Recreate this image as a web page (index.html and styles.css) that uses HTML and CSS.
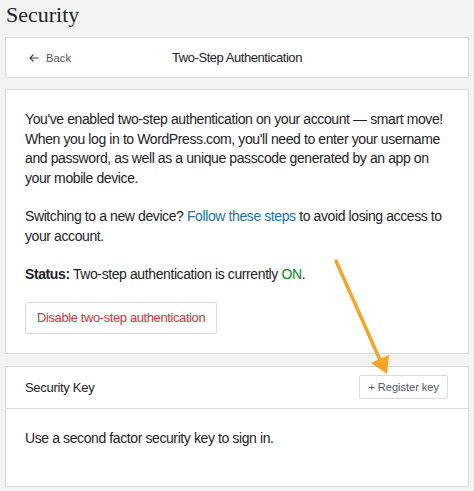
FILE: index.html
```html
<!DOCTYPE html>
<html>
<head>
<meta charset="utf-8">
<link rel="stylesheet" href="styles.css">
</head>
<body>
<div class="page">
  <h1 class="title">Security</h1>
  <div class="card header-card">
    <a class="back"><svg class="back-icon" viewBox="0 0 24 24" width="12" height="12"><path d="M21 12H4M11 5l-7 7 7 7" fill="none" stroke="#3c434a" stroke-width="2.2"/></svg>Back</a>
    <div class="header-title">Two-Step Authentication</div>
  </div>
  <div class="card main-card">
    <p>You've enabled two-step authentication on your account — smart move! When you log in to WordPress.com, you'll need to enter your username and password, as well as a unique passcode generated by an app on your mobile device.</p>
    <p>Switching to a new device? <a class="link">Follow these steps</a> to avoid losing access to your account.</p>
    <p class="status"><strong>Status:</strong> Two-step authentication is currently <span class="on">ON</span>.</p>
    <button class="btn btn-danger">Disable two-step authentication</button>
  </div>
  <div class="card key-card">
    <div class="key-head">
      <div class="key-title">Security Key</div>
      <button class="btn btn-small">+ Register key</button>
    </div>
    <div class="key-body">Use a second factor security key to sign in.</div>
  </div>
  <svg class="arrow" width="474" height="491" viewBox="0 0 474 491">
    <line x1="336" y1="261" x2="380" y2="360" stroke="#f6a623" stroke-width="3.5" stroke-linecap="round"/>
    <polygon points="371,363 389,355 387,374" fill="#f6a623"/>
  </svg>
</div>
</body>
</html>
```
FILE: styles.css
```css
html, body { margin: 0; padding: 0; }
body { background: #f3f3f3; font-family: "Liberation Sans", Arial, sans-serif; color: #1d2327; }
.page { position: relative; width: 474px; height: 491px; padding: 0 5px; box-sizing: border-box; }
.title { margin: 0; padding: 2px 0 0 1px; height: 35px; font-family: "Liberation Serif", serif; font-weight: normal; font-size: 22px; line-height: 26px; color: #1d2327; }
.card { background: #fff; border: 1px solid #dcdcde; box-sizing: border-box; }
.header-card { height: 41px; display: flex; align-items: center; position: relative; padding: 0 22px; margin-bottom: 11px; }
.back { display: flex; align-items: center; gap: 6px; font-size: 11px; color: #50575e; letter-spacing: 0.2px; }
.header-title { position: absolute; left: 0; right: 0; text-align: center; font-size: 13px; letter-spacing: -0.45px; color: #1d2327; pointer-events: none; }
.main-card { padding: 20px 19px 19px 19px; margin-bottom: 12px; }
.main-card p { margin: 0 0 19px; font-size: 14px; letter-spacing: -0.4px; line-height: 19.5px; }
.main-card p.status { margin-bottom: 17px; }
.link { color: #2271b1; }
.on { color: #008a20; }
.btn { display: block; background: #fff; border: 1px solid #dcdcde; border-radius: 2px; font-family: inherit; }
.btn-danger { color: #d63638; font-size: 13px; letter-spacing: -0.4px; height: 32px; padding: 0 11px; }
.key-head { display: flex; align-items: center; justify-content: space-between; height: 42px; padding: 0 20px 0 19px; border-bottom: 1px solid #dcdcde; box-sizing: border-box; }
.key-title { font-size: 13px; letter-spacing: -0.3px; }
.btn-small { font-size: 11px; height: 24px; padding: 0 8px; color: #50575e; }
.key-body { padding: 20px 19px 38px; font-size: 14px; letter-spacing: -0.4px; line-height: 19.5px; }
.arrow { position: absolute; left: 0; top: 0; pointer-events: none; }
```
